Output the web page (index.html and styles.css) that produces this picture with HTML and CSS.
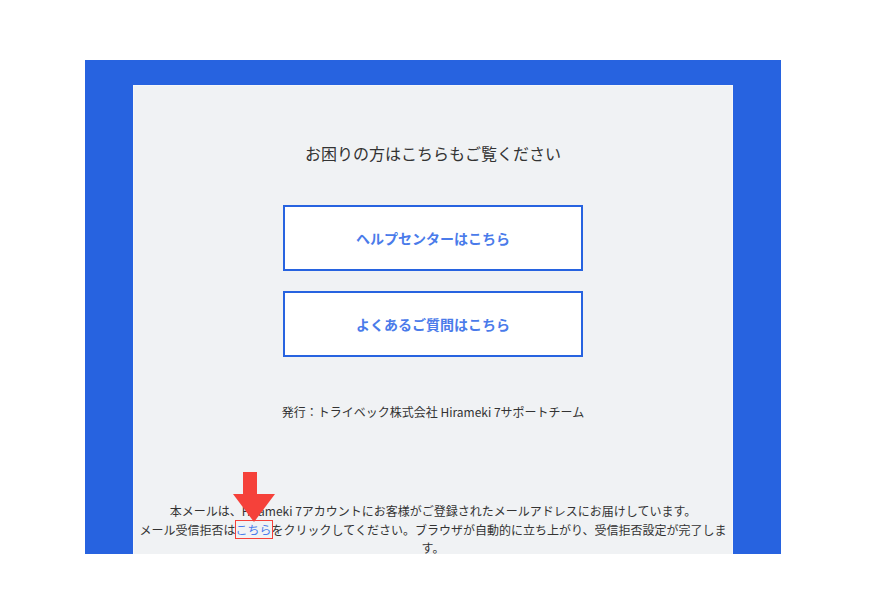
FILE: index.html
```html
<!DOCTYPE html>
<html lang="ja">
<head>
<meta charset="utf-8">
<link rel="stylesheet" href="styles.css">
</head>
<body>
<div class="page">
  <div class="frame">
    <div class="panel">
      <h2 class="heading">お困りの方はこちらもご覧ください</h2>
      <div class="buttons">
        <a class="btn">ヘルプセンターはこちら</a>
        <a class="btn">よくあるご質問はこちら</a>
      </div>
      <p class="publisher">発行：トライベック株式会社 Hirameki 7サポートチーム</p>
      <p class="footer">本メールは、Hirameki 7アカウントにお客様がご登録されたメールアドレスにお届けしています。<br>メール受信拒否は<span class="link">こちら<svg class="arrow" width="42" height="50" viewBox="0 0 42 50"><polygon points="10,0 24,0 24,22 42,22 21,50 0,22 10,22" fill="#f5413a"/></svg></span>をクリックしてください。ブラウザが自動的に立ち上がり、受信拒否設定が完了します。</p>
    </div>
  </div>
</div>
</body>
</html>
```
FILE: styles.css
```css
html, body {
  margin: 0;
  padding: 0;
  background: #ffffff;
}
body {
  font-family: "Noto Sans CJK JP", "Noto Sans", sans-serif;
  color: #333333;
}
.page {
  padding: 60px 0 0 85px;
}
.frame {
  width: 696px;
  height: 494px;
  box-sizing: border-box;
  background: #2763e0;
  padding: 25px 48px 0 48px;
  overflow: hidden;
}
.panel {
  width: 600px;
  min-height: 600px;
  box-sizing: border-box;
  background: #f0f2f4;
  border: 1px solid #f6f7f9;
  padding: 55px 4px 0 4px;
  text-align: center;
}
.heading {
  margin: 0;
  font-size: 16px;
  font-weight: normal;
  line-height: 24px;
  color: #333333;
}
.buttons {
  margin-top: 40px;
  display: flex;
  flex-direction: column;
  align-items: center;
  gap: 20px;
}
.btn {
  display: flex;
  align-items: center;
  justify-content: center;
  width: 300px;
  height: 66px;
  box-sizing: border-box;
  border: 2px solid #2763e0;
  background: #ffffff;
  color: #4a7bea;
  font-size: 14px;
  font-weight: bold;
  text-decoration: none;
}
.publisher {
  margin: 46px 0 0 0;
  font-size: 12px;
  line-height: 18px;
}
.footer {
  margin: 81px 0 0 0;
  font-size: 12px;
  line-height: 18.5px;
}
.link {
  position: relative;
  color: #4a7bea;
  outline: 1px solid #f5413a;
  outline-offset: 0;
}
.arrow {
  position: absolute;
  left: -3px;
  top: -49px;
}
```
